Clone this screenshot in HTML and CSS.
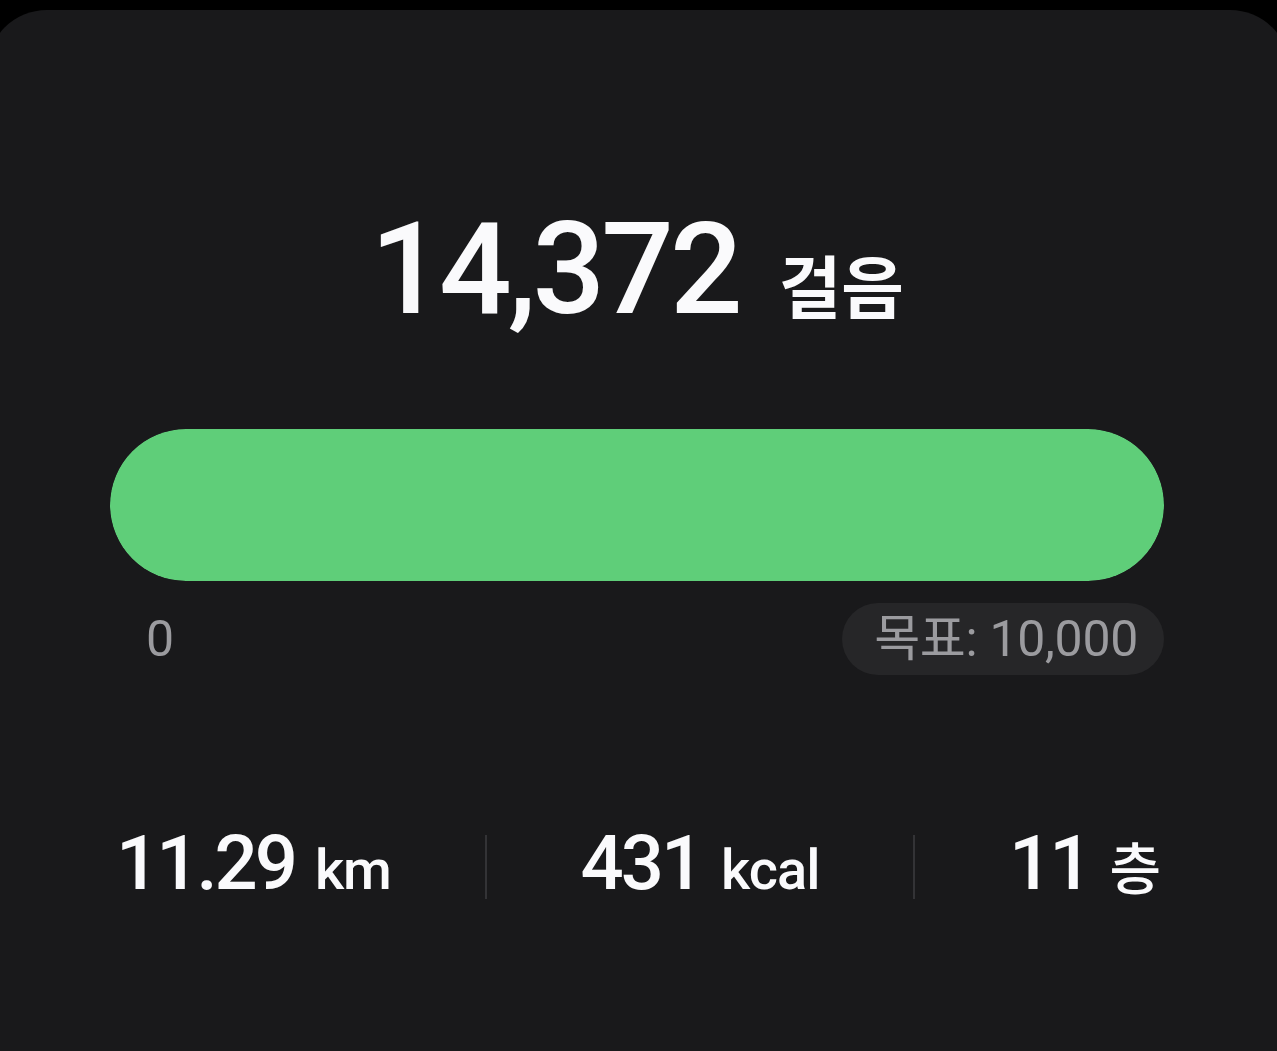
FILE: index.html
```html
<!DOCTYPE html>
<html lang="ko">
<head>
  <meta charset="UTF-8">
  <title>걸음 수</title>
  <link rel="stylesheet" href="styles.css">
</head>
<body>

  <div class="card">
    <div class="steps">
      <span class="steps-count">14,372</span>
      <span class="steps-unit">걸음</span>
    </div>

    <div class="bar">
      <div class="bar-fill" style="width: 100%"></div>
    </div>

    <div class="bar-labels">
      <span class="bar-min">0</span>
      <span class="goal">목표: 10,000</span>
    </div>

    <div class="stats">
      <div class="stat">
        <span class="stat-value">11.29</span>
        <span class="stat-unit">km</span>
      </div>
      <div class="divider"></div>
      <div class="stat">
        <span class="stat-value">431</span>
        <span class="stat-unit">kcal</span>
      </div>
      <div class="divider"></div>
      <div class="stat">
        <span class="stat-value">11</span>
        <span class="stat-unit">층</span>
      </div>
    </div>
  </div>

</body>
</html>
```

FILE: styles.css
```css
body {
  margin: 0;
  padding: 0;
  background-color: #000;
  font-family: Roboto, "Noto Sans CJK KR", sans-serif;
  color: #fafafc;
  overflow: hidden;
}

.card {
  margin: 10px -13px 0 -13px;
  min-height: 1041px;
  padding: 195px 126px 0 123px;
  box-sizing: border-box;
  background-color: #19191b;
  border-radius: 60px 60px 0 0;
}

.steps {
  display: flex;
  justify-content: center;
  align-items: baseline;
  gap: 40px;
  line-height: 1;
}

.steps-count {
  font-size: 128px;
  font-weight: 500;
  letter-spacing: -4px;
}

.steps-unit {
  font-family: "Noto Sans CJK KR", sans-serif;
  font-size: 68px;
  font-weight: 700;
}

.bar {
  margin-top: 96px;
  height: 152px;
  border-radius: 76px;
  background-color: #2a2a2c;
  overflow: hidden;
}

.bar-fill {
  height: 100%;
  border-radius: 76px;
  background-color: #5fce79;
}

.bar-labels {
  display: flex;
  justify-content: space-between;
  align-items: center;
  margin-top: 22px;
  color: #9b9b9f;
  font-size: 50px;
  line-height: 1;
}

.bar-min {
  padding-left: 36px;
}

.goal {
  display: flex;
  align-items: center;
  height: 72px;
  padding: 0 26px 0 32px;
  border-radius: 36px;
  background-color: #262628;
  letter-spacing: -0.3px;
}

.stats {
  display: flex;
  justify-content: space-between;
  align-items: center;
  margin-top: 150px;
  padding: 0 4px 0 6px;
}

.stat {
  display: flex;
  align-items: baseline;
  gap: 20px;
  line-height: 1;
}

.stat-value {
  font-size: 76px;
  font-weight: 500;
  letter-spacing: -3px;
}

.stat-unit {
  font-size: 56px;
  font-weight: 500;
  letter-spacing: -1px;
}

.divider {
  width: 2px;
  height: 64px;
  margin-top: 8px;
  background-color: #333336;
}
```
